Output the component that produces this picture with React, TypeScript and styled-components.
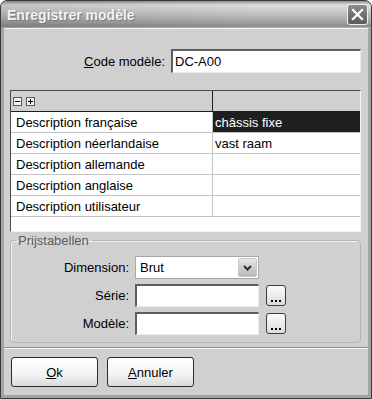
import styled, { createGlobalStyle } from "styled-components";

const GlobalStyle = createGlobalStyle`
  html, body { margin: 0; padding: 0; background: #ffffff; }
  body { font-family: "Liberation Sans", Arial, sans-serif; font-size: 13px; color: #000; }
  * { box-sizing: border-box; }
`;

const Window = styled.div`
  width: 372px;
  height: 399px;
  display: flex;
  flex-direction: column;
  background: #a4a4a4;
  border: 1px solid #3a3a3a;
  border-radius: 7px 7px 0 0;
  overflow: hidden;
`;

const TitleBar = styled.div`
  height: 27px;
  flex: none;
  display: flex;
  align-items: center;
  justify-content: space-between;
  padding: 0 3px 0 6px;
  background: linear-gradient(to right, rgba(0, 0, 0, 0.1), rgba(0, 0, 0, 0) 70%),
    linear-gradient(to bottom, #8e8e8e 0%, #dcdcdc 14%, #cfcfcf 32%, #ababab 70%, #8c8c8c 94%, #bdbdbd 100%);
`;

const Title = styled.span`
  font-size: 14px;
  font-weight: bold;
  color: #f2f2f2;
  text-shadow: 1px 1px 0 #7a7a7a;
`;

const CloseButton = styled.div`
  width: 21px;
  height: 21px;
  border-radius: 3px;
  border: 1px solid #f0f0f0;
  background: linear-gradient(to bottom, #8a8a8a, #5c5c5c);
  display: flex;
  align-items: center;
  justify-content: center;
`;

const Client = styled.div`
  flex: 1;
  margin: 0 3px 3px 3px;
  background: #d0d0d0;
  display: flex;
  flex-direction: column;
`;

const Panel = styled.div`
  height: 320px;
  flex: none;
  display: flex;
  flex-direction: column;
  padding: 20px 7px 0 6px;
  border-top: 1px solid #f4f4f4;
  border-bottom: 1px solid #8c8c8c;
  box-shadow: 0 1px 0 #f6f6f6;
`;

const CodeRow = styled.div`
  display: flex;
  justify-content: flex-end;
  align-items: center;
  gap: 6px;
  height: 24px;
`;

const Label = styled.label`
  font-size: 13px;
  color: #000;
  text-align: right;
  white-space: nowrap;
`;

const TextBox = styled.div<{ $w: number; $h: number }>`
  width: ${(p) => p.$w}px;
  height: ${(p) => p.$h}px;
  background: #ffffff;
  border-top: 2px solid #5e5e5e;
  border-left: 2px solid #5e5e5e;
  border-right: 1px solid #ececec;
  border-bottom: 1px solid #ececec;
  padding: 2px 2px 0;
  font-size: 13px;
  line-height: 18px;
`;

const Table = styled.div`
  margin-top: 17px;
  height: 142px;
  display: flex;
  flex-direction: column;
  background: #ffffff;
  border: 1px solid;
  border-color: #4a4a4a #f2f2f2 #f2f2f2 #4a4a4a;
`;

const Row = styled.div<{ $head?: boolean }>`
  display: grid;
  grid-template-columns: 202px 1fr;
  height: 21px;
  flex: none;
  background: ${(p) => (p.$head ? "#d0d0d0" : "#ffffff")};
  border-bottom: 1px solid ${(p) => (p.$head ? "#1e1e1e" : "#c4c4c4")};
`;

const Cell = styled.div<{ $first?: boolean; $head?: boolean; $selected?: boolean }>`
  display: flex;
  align-items: center;
  gap: 4px;
  padding-left: ${(p) => (p.$head ? "2px" : p.$first ? "5px" : "2px")};
  font-size: 13px;
  white-space: nowrap;
  background: ${(p) => (p.$selected ? "#1f1f1f" : "transparent")};
  color: ${(p) => (p.$selected ? "#ffffff" : "#000000")};
  border-right: ${(p) => (p.$first ? `1px solid ${p.$head ? "#1e1e1e" : "#c4c4c4"}` : "none")};
`;

const TreeToggle = styled.span`
  width: 9px;
  height: 9px;
  border: 1px solid #5a5a5a;
  background: #f4f4f4;
  display: inline-flex;
  align-items: center;
  justify-content: center;
`;

const TableFill = styled.div`
  flex: 1;
`;

const Group = styled.fieldset`
  margin: 1px 0 0;
  height: 110px;
  padding: 3px 0 5px 0;
  border: 1px solid #b4b4b4;
  border-radius: 4px;
  box-shadow: inset 1px 1px 0 #f2f2f2;
  min-width: 0;
`;

const Legend = styled.legend`
  margin-left: 5px;
  padding: 0 3px 0 2px;
  color: #5c5c5c;
  font-size: 13px;
  line-height: 15px;
`;

const FormGrid = styled.div`
  display: grid;
  grid-template-columns: 118px 124px 27px;
  grid-auto-rows: 23px;
  column-gap: 6px;
  row-gap: 5px;
  align-items: center;
  margin-top: 5px;
`;

const Select = styled.div`
  height: 23px;
  background: #ffffff;
  border: 1px solid #a8a8a8;
  display: flex;
  align-items: stretch;
`;

const SelectValue = styled.div`
  flex: 1;
  display: flex;
  align-items: center;
  padding-left: 4px;
  font-size: 13px;
`;

const DropButton = styled.div`
  width: 19px;
  margin: 1px;
  border: 1px solid #c6c6c6;
  border-radius: 2px;
  background: linear-gradient(to bottom, #e6e6e6, #b9b9b9);
  display: flex;
  align-items: center;
  justify-content: center;
`;

const BrowseButton = styled.div`
  width: 20px;
  height: 21px;
  margin-left: 1px;
  border: 1px solid #3e3e3e;
  border-radius: 3px;
  background: linear-gradient(to bottom, #fbfbfb, #dcdcdc);
  display: flex;
  align-items: flex-end;
  justify-content: center;
  padding-bottom: 3px;
`;

const Dots = styled.span`
  display: flex;
  gap: 2px;
  & > i {
    width: 2px;
    height: 2px;
    background: #000;
  }
`;

const Footer = styled.div`
  display: flex;
  gap: 9px;
  padding: 9px 0 0 7px;
`;

const PushButton = styled.button`
  width: 87px;
  height: 30px;
  border: 1px solid #2c2c2c;
  border-radius: 3px;
  background: linear-gradient(to bottom, #ffffff 0%, #f2f2f2 60%, #dadada 100%);
  font-family: "Liberation Sans", Arial, sans-serif;
  font-size: 13px;
  color: #000;
  padding: 0;
`;

const rows = [
  { label: "Description française", value: "châssis fixe", selected: true },
  { label: "Description néerlandaise", value: "vast raam" },
  { label: "Description allemande", value: "" },
  { label: "Description anglaise", value: "" },
  { label: "Description utilisateur", value: "" },
];

const Chevron = () => (
  <svg width="9" height="6" viewBox="0 0 9 6">
    <path d="M1 1 L4.5 4.5 L8 1" fill="none" stroke="#2a2a2a" strokeWidth="2" />
  </svg>
);

const Browse = () => (
  <BrowseButton>
    <Dots>
      <i />
      <i />
      <i />
    </Dots>
  </BrowseButton>
);

export default function App() {
  return (
    <>
      <GlobalStyle />
      <Window>
        <TitleBar>
          <Title>Enregistrer modèle</Title>
          <CloseButton>
            <svg width="13" height="13" viewBox="0 0 13 13">
              <path d="M2 2 L11 11 M11 2 L2 11" stroke="#ffffff" strokeWidth="2.2" strokeLinecap="square" />
            </svg>
          </CloseButton>
        </TitleBar>
        <Client>
          <Panel>
            <CodeRow>
              <Label>
                <u>C</u>ode modèle:
              </Label>
              <TextBox $w={190} $h={24}>DC-A00</TextBox>
            </CodeRow>

            <Table>
              <Row $head>
                <Cell $first $head>
                  <TreeToggle>
                    <svg width="7" height="7" viewBox="0 0 7 7">
                      <path d="M1 3.5 H6" stroke="#000" strokeWidth="1" />
                    </svg>
                  </TreeToggle>
                  <TreeToggle>
                    <svg width="7" height="7" viewBox="0 0 7 7">
                      <path d="M1 3.5 H6 M3.5 1 V6" stroke="#000" strokeWidth="1" />
                    </svg>
                  </TreeToggle>
                </Cell>
                <Cell />
              </Row>
              {rows.map((r) => (
                <Row key={r.label}>
                  <Cell $first>{r.label}</Cell>
                  <Cell $selected={r.selected}>{r.value}</Cell>
                </Row>
              ))}
              <TableFill />
            </Table>

            <Group>
              <Legend>Prijstabellen</Legend>
              <FormGrid>
                <Label>Dimension:</Label>
                <Select>
                  <SelectValue>Brut</SelectValue>
                  <DropButton>
                    <Chevron />
                  </DropButton>
                </Select>
                <span />
                <Label>Série:</Label>
                <TextBox $w={124} $h={23} />
                <Browse />
                <Label>Modèle:</Label>
                <TextBox $w={124} $h={23} />
                <Browse />
              </FormGrid>
            </Group>
          </Panel>
          <Footer>
            <PushButton>
              <u>O</u>k
            </PushButton>
            <PushButton>
              <u>A</u>nnuler
            </PushButton>
          </Footer>
        </Client>
      </Window>
    </>
  );
}
